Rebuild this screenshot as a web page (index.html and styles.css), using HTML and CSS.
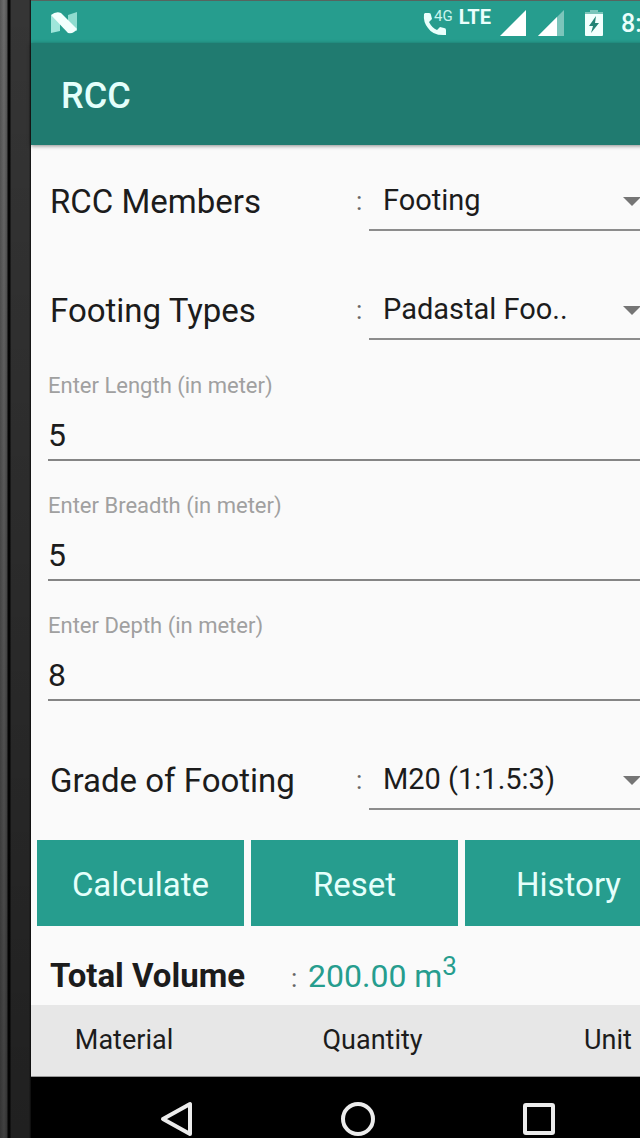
FILE: index.html
```html
<!DOCTYPE html>
<html lang="en">
<head>
<meta charset="utf-8">
<meta name="viewport" content="width=device-width, initial-scale=1">
<title>RCC</title>
<link rel="stylesheet" href="styles.css">
</head>
<body>
<div class="device">
  <div class="bezel"></div>
  <div class="screen">
    <div class="status">
      <svg class="status-n" width="28" height="24" viewBox="0 0 28 24" aria-hidden="true">
        <path d="M1 4 10 9V20L1 22Z" fill="#9fe6db"/>
        <path d="M18 4 27 1V20L18 16Z" fill="#8fdccf"/>
        <path d="M1 4Q6 0 11 2L27 18Q24 23 18 22Z" fill="#f2fffd"/>
      </svg>
      <div class="status-right">
        <svg class="call" width="30" height="28" viewBox="0 0 30 28" aria-hidden="true">
          <path d="M2 4H6Q8 4 8 6L9 10 6 13Q9 19 14 21L17 18 21 19Q23 19 23 21V26Q10 27 5 19Q0 13 1 5Z" fill="#eafffc"/>
          <text x="11" y="12" class="call-text">4G</text>
        </svg>
        <span class="lte">LTE</span>
        <svg class="signal" width="28" height="28" viewBox="0 0 28 28" aria-hidden="true"><path d="M27 1V27H1Z" fill="#fff"/></svg>
        <svg class="signal-weak" width="28" height="28" viewBox="0 0 28 28" aria-hidden="true"><path d="M27 1V27H1Z" fill="#7cc5bb"/><path d="M20 8V27H1Z" fill="#fff"/></svg>
        <svg class="battery" width="18" height="28" viewBox="0 0 18 28" aria-hidden="true">
          <path d="M5 1H13V3H18V6H0V3H5Z" fill="#7cc5bb"/><path d="M0 5H18V26Q18 27 17 27H1Q0 27 0 26Z" fill="#f2fffd"/>
          <path d="M11 7 4 17H8L6 24 14 14H10Z" fill="#238375"/>
        </svg>
        <span class="clock">8:</span>
      </div>
    </div>
    <header class="appbar"><h1>RCC</h1></header>
    <main>
      <form class="form">
        <div class="row">
          <label for="member">RCC Members</label><span class="colon">:</span>
          <div class="spinner"><select id="member"><option>Footing</option></select><svg width="18" height="9" viewBox="0 0 18 9" aria-hidden="true"><path d="M0 0H18L9 9Z"/></svg></div>
        </div>
        <div class="row">
          <label for="type">Footing Types</label><span class="colon">:</span>
          <div class="spinner"><select id="type"><option>Padastal Foo..</option></select><svg width="18" height="9" viewBox="0 0 18 9" aria-hidden="true"><path d="M0 0H18L9 9Z"/></svg></div>
        </div>
        <div class="fields">
          <div class="field"><label for="length">Enter Length (in meter)</label><input id="length" type="text" value="5"></div>
          <div class="field"><label for="breadth">Enter Breadth (in meter)</label><input id="breadth" type="text" value="5"></div>
          <div class="field"><label for="depth">Enter Depth (in meter)</label><input id="depth" type="text" value="8"></div>
        </div>
        <div class="row">
          <label for="grade">Grade of Footing</label><span class="colon">:</span>
          <div class="spinner"><select id="grade"><option>M20 (1:1.5:3)</option></select><svg width="18" height="9" viewBox="0 0 18 9" aria-hidden="true"><path d="M0 0H18L9 9Z"/></svg></div>
        </div>
        <div class="actions">
          <button type="button">Calculate</button>
          <button type="button">Reset</button>
          <button type="button">History</button>
        </div>
      </form>
      <div class="total">
        <strong>Total Volume</strong><span class="colon">:</span><span class="amount">200.00 m<sup>3</sup></span>
      </div>
      <table class="materials">
        <thead><tr><th class="col-material">Material</th><th class="col-quantity">Quantity</th><th class="col-unit">Unit</th></tr></thead>
      </table>
    </main>
    <nav class="navbar">
      <button type="button" aria-label="Back"><svg width="36" height="36" viewBox="0 0 36 36"><path d="M31 3V33L4 18Z"/></svg></button>
      <button type="button" aria-label="Home"><svg width="36" height="36" viewBox="0 0 36 36"><circle cx="18" cy="18" r="15"/></svg></button>
      <button type="button" aria-label="Recent apps"><svg width="36" height="36" viewBox="0 0 36 36"><rect x="4" y="4" width="28" height="28" rx="1"/></svg></button>
    </nav>
  </div>
</div>
</body>
</html>
```
FILE: styles.css
```css
* {
  box-sizing: border-box;
}

body {
  margin: 0;
  overflow: hidden;
  background: #000;
  font-family: Roboto, "Liberation Sans", sans-serif;
  color: #1c1c1c;
}

button,
input,
select {
  margin: 0;
  padding: 0;
  border: 0;
  border-radius: 0;
  background: none;
  font-family: inherit;
  color: inherit;
}

/* The device runs past the right edge of the window. */
.device {
  display: flex;
  min-height: 100vh;
  margin-right: -45px;
}

.bezel {
  flex: 0 0 31px;
  background:
    linear-gradient(to bottom, transparent, rgba(0, 0, 0, 0.4)),
    linear-gradient(to right, #555 0, #6c6c6c 4px, #555 7px, #050505 8px, #050505 10px, #353535 11px, #353535 29px, #111 31px);
}

.screen {
  flex: 1;
  min-width: 0;
  display: flex;
  flex-direction: column;
  background: #fafafa;
}

.status {
  display: flex;
  justify-content: space-between;
  align-items: center;
  height: 43px;
  padding: 2px 0 0 19px;
  border-top: 1px solid #56645f;
  background: #269d8e;
  color: #eafffc;
}

.status-right {
  display: flex;
  align-items: center;
}

.call-text {
  font-size: 15px;
  fill: #c9f5ee;
}

.lte {
  margin: 0 8px 0 6px;
  padding-bottom: 12px;
  font-size: 20px;
  line-height: 20px;
  font-weight: 700;
}

.signal {
  margin-right: 10px;
}

.signal-weak {
  margin-right: 20px;
}

.battery {
  margin-right: 18px;
}

.clock {
  width: 64px;
  font-size: 25px;
  font-weight: 500;
}

.appbar {
  display: flex;
  align-items: center;
  height: 102px;
  padding: 4px 0 0 30px;
  background: #207b70;
  box-shadow: 0 1px 4px rgba(0, 0, 0, 0.45);
  color: #e4fffb;
}

.appbar h1 {
  margin: 0;
  font-size: 36px;
  font-weight: 500;
}

.form {
  padding-top: 26px;
}

.row {
  display: grid;
  grid-template-columns: 1fr 13px 1fr;
  align-items: center;
  height: 60px;
  margin-bottom: 49px;
  padding: 0 10px 0 19px;
  font-size: 33px;
}

.colon {
  font-size: 26px;
  color: #666;
}

.spinner {
  position: relative;
  height: 60px;
}

.spinner select {
  appearance: none;
  width: 100%;
  height: 100%;
  padding-left: 14px;
  border-bottom: 2px solid #8c8c8c;
  font-size: 29px;
}

.spinner svg {
  position: absolute;
  top: 26px;
  right: 34px;
  fill: #757575;
  pointer-events: none;
}

.fields {
  display: grid;
  gap: 31px;
  margin: -17px 0 49px;
  padding: 0 17px;
}

.field label {
  display: block;
  padding-top: 1px;
  font-size: 22px;
  line-height: 26px;
  color: #a0a0a0;
}

.field input {
  display: block;
  width: 100%;
  height: 62px;
  padding-top: 12px;
  border-bottom: 2px solid #858585;
  font-size: 32px;
}

.actions {
  display: grid;
  grid-template-columns: repeat(3, 1fr);
  gap: 7px;
  margin-top: -19px;
  padding: 0 13px 0 6px;
}

.actions button {
  height: 86px;
  padding-top: 2px;
  background: #269d8e;
  font-size: 33px;
  color: #e4fffb;
}

.total {
  display: flex;
  align-items: baseline;
  height: 79px;
  padding: 20px 19px 0;
  font-size: 32px;
  line-height: 60px;
}

.total strong {
  width: 241px;
  font-size: 33px;
  font-weight: 700;
}

.total .colon {
  width: 17px;
}

.amount {
  color: #269d8e;
}

.amount sup {
  font-size: 26px;
  line-height: 0;
}

.materials {
  width: 100%;
  table-layout: fixed;
  border-collapse: collapse;
  border-bottom: 1px solid #999;
  background: #e7e7e7;
}

.materials th {
  height: 71px;
  padding: 0 0 0 3px;
  font-size: 27px;
  font-weight: 400;
}

.col-material {
  width: 28%;
}

.col-quantity {
  width: 48%;
}

.navbar {
  flex: 1;
  display: flex;
  justify-content: center;
  align-items: flex-start;
  gap: 145px;
  padding-top: 24px;
  background: #000;
}

.navbar button,
.navbar svg {
  display: block;
}

.navbar svg {
  fill: none;
  stroke: #ececec;
  stroke-width: 4;
  stroke-linejoin: round;
}
```
